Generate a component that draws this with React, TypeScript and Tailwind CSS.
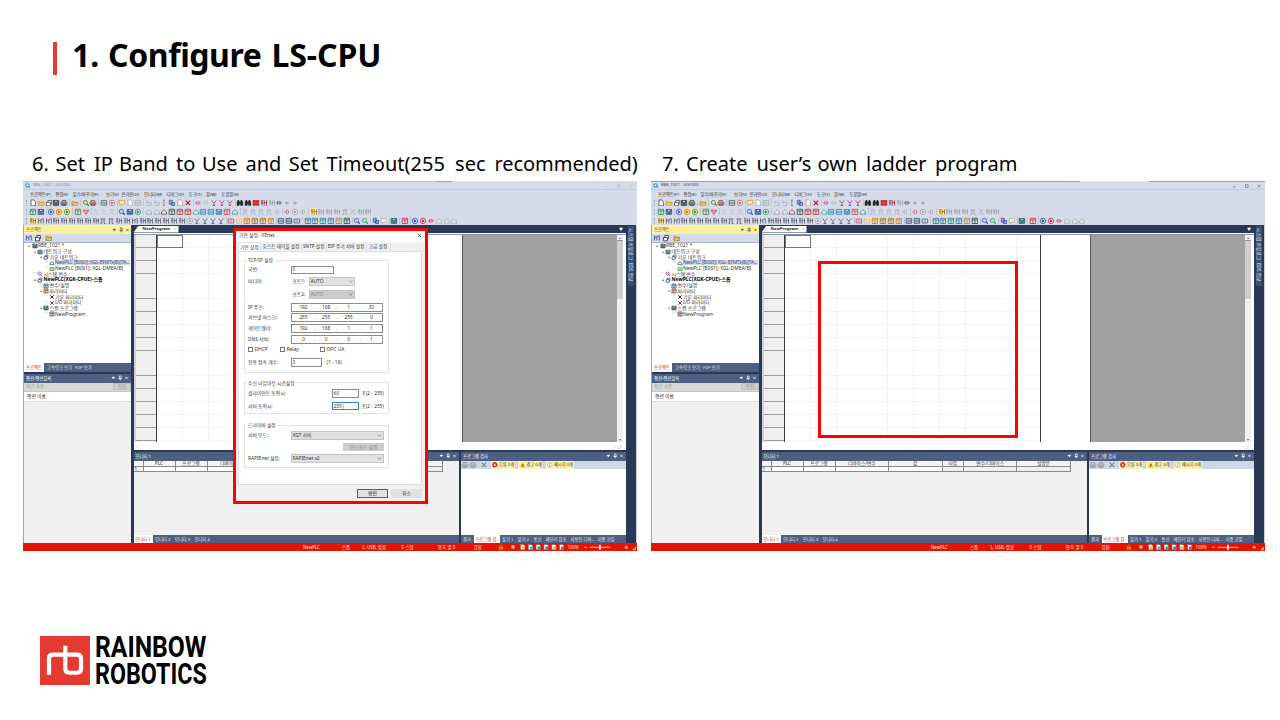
import React from "react";
import clsx from "clsx";

const toolRows: string[] = [
  "d:#444 f:#c9a227 r:#444 s:#333 p:#444 | f:#c08a2c | M:#2f7d6b p:#8a4a4a | l:#5a6a6a o:#c66 | c:#e0902c d:#aaa l:#aaa | u:#aab u:#aab i:#777 C:#3b5ea8 d:#c88 x:#c8102e | a:#c48 a:#bbb y:#a33 y:#a2b y:#b33 | b:#222 b:#222 G2:#c22 k:#823 k:#999 a:#447 w:#889 w:#889",
  "g:#2a8a4a s:#334a7a | o:#2b50c0 O:#c06a10 O:#2a8a3a | g:#5a7a4a v:#c44 | z:#bbb z:#bbb z:#aaa | m:#2a50b0 s:#2a4a8a o:#2a8a4a | h:#99a h:#99a h:#833 g:#444 g:#a33 g:#a33 h:#3a7 l:#28a l:#28a s:#38a g:#c44 h:#486 | t:#aab t:#aab t:#aab t:#aab q:#aab | q:#b55 o:#99a q:#99a | K:#7a6a20 k:#999 k:#999 k:#999 t:#999 z:#999 k:#999 k:#999",
  "K:#6a5a20 n:#556 n:#556 k:#556 k:#556 k:#556 k:#556 k:#556 k:#556 t:#556 t:#556 k:#556 k:#556 n:#556 k:#556 k:#556 k:#556 k:#556 k:#556 k:#556 o:#99a y:#556 y:#556 y:#556 y:#556 | e:#a44 E:#ca8 G:#d07020 G:#963 G:#963 G:#d07020 | l:#456 l:#256 e:#356 | G:#2a6aa0 G:#2a6aa0 g:#2a7aa0 g:#2a7aa0 g:#c08030 g:#243 | m:#3a4ac0 m:#3aa04a | C:#3a4ac0 c:#aaa | s:#1d5a5a | g:#c23 | o:#24a o:#a24 a:#c35 h:#aaa h:#aaa h:#aaa",
];

const shapes: Record<string, React.ReactNode> = {
  d: <path d="M2 1h3l1.5 1.5V7H2z" fill="#fff" />,
  f: <path d="M1 6.5V2.5h2l.6.8H7v3.2zM1.5 6l1-2H7.4" fill="#f7d774" />,
  r: <path d="M1.5 3.5h4V7h-4zM3 3.5V1.5h3.5V5H5.5" fill="#fff" />,
  s: <path d="M1.2 1.5h5.6v5H1.2zM2.5 1.7v2h3v-2M2.5 5.3h3" fill="currentColor" fillOpacity=".55" />,
  p: <path d="M2.2 3.2V1.5h3.6v1.7M1 3.3h6v2.6H1zM2.3 4.8h3.4v2H2.3z" fill="#ccd" />,
  l: <path d="M1.2 1.5h5.6v5H1.2zM1.2 3.2h5.6M1.2 4.9h5.6" fill="#dfe4f2" />,
  o: <><circle cx="4" cy="4" r="2.8" fill="#f3f5fb" /><path d="M3.2 2.7 5.4 4 3.2 5.3z" fill="currentColor" /></>,
  c: <path d="M1.2 1.5h5.6v3.7H4L2.4 6.8V5.2H1.2z" fill="#fff3c8" />,
  u: <path d="M2.8 1.8 1.3 3.3l1.5 1.4M1.4 3.3h3.3q2 0 2 1.8T4.7 6.7H2" fill="none" />,
  i: <path d="M3 1.2h2M4 1.2v5.6M3 6.8h2" fill="none" />,
  C: <path d="M1.3 1.3h3v4h-3zM3.5 3.5h3.2v3.2H3.5z" fill="#8fa6de" />,
  x: <path d="m1.7 1.7 4.6 4.6M6.3 1.7 1.7 6.3" fill="none" strokeWidth="1.3" />,
  a: <path d="M1 4h2M5 4h2M3 2v4M5 2v4" fill="none" />,
  y: <path d="m1.6 1.5 2.4 3 2.4-3M4 4.5v2M2.6 6.6h2.8" fill="none" />,
  b: <path d="M1.2 3.2 2 1.5h1l.3 2h1.4l.3-2h1l.8 1.7v3.3H4.8v-2H3.2v2h-2z" fill="currentColor" />,
  g: <path d="M1.2 1.3h5.6v5.4H1.2zM1.2 3h5.6M4 3v3.7" fill="#cfe0ee" />,
  G2: <path d="M1 1.5h2.6v2H1zM4.4 1.5H7v2H4.4zM1 4.5h2.6v2H1zM4.4 4.500H7v2H4.4z" fill="currentColor" />,
  k: <path d="M1 1.8h2.3M1 4h2.3M2.1 1.8V6.6M4.3 1.3v5.4M4.3 3.6h2.3M6.7 1.3v5.4" fill="none" />,
  n: <path d="M1.5 1.3v5.4M1.5 4 6.5 1.5M4 3v3.5M6.5 2v4.7" fill="none" />,
  t: <path d="M1.5 2h5M2.8 2v4.6M5.2 2v4.6M1.3 6.6h1.5M5.2 6.6h1.5" fill="none" />,
  q: <path d="M1.2 4h1.2M3.8 1.8Q2 4 3.8 6.2M4.8 1.8Q6.8 4 4.8 6.2" fill="none" />,
  w: <path d="M2 4h4M4 2.6v2.8" fill="none" />,
  v: <path d="M1 2.3h6L4 6.5z" fill="#e7a9a9" />,
  z: <path d="M1.5 6.3 6.2 1.7M2 2h2M4.3 6h2.4" fill="none" />,
  m: <><circle cx="3.5" cy="3.5" r="2.2" fill="#bfd8ff" /><path d="m5.2 5.2 1.7 1.7" strokeWidth="1.3" /></>,
  h: <path d="M1.2 6.3h5.6L6.3 4 4 1.7 1.7 4z" fill="#e3e6ee" />,
  e: <path d="M1.2 2.2h5.6v3.9H1.2zM2.5 4.2h3" fill="#eef" />,
};
const litKinds: Record<string, string> = { O: "o", K: "k", G: "g", M: "m", E: "e" };

function Icon({ kind, color }: { kind: string; color: string }) {
  const lit = kind in litKinds;
  return (
    <svg
      viewBox="0 0 8 8"
      className={clsx("h-[7.8px] w-[7.84px] shrink-0", lit && "bg-[#fbe7a2]")}
      style={{ color }}
      stroke="currentColor"
      strokeWidth=".8"
      fill="none"
    >
      {shapes[lit ? litKinds[kind] : kind]}
    </svg>
  );
}

function Toolbar({ spec }: { spec: string }) {
  return (
    <div className="flex h-[9px] items-center pl-[3px]">
      <span className="mr-[2px] h-[6px] w-px shrink-0 border-l border-dotted border-[#9aa4bd]" />
      {spec.split(" ").map((t, i) =>
        t === "|" ? (
          <span key={i} className="ml-[1.2px] mr-[.6px] h-[7px] w-px shrink-0 bg-[#bcc4d8]" />
        ) : (
          <Icon key={i} kind={t.split(":")[0]} color={t.split(":")[1]} />
        )
      )}
    </div>
  );
}

function PanelControls({ dark }: { dark?: boolean }) {
  return (
    <svg viewBox="0 0 18 6" className={clsx("h-[6px] w-[18px] shrink-0", dark ? "text-[#665f35]" : "text-white")} stroke="currentColor" fill="none" strokeWidth=".7">
      <path d="M1 2.300h2.600L2.300 3.800z" fill="currentColor" />
      <path d="M8.3 1h1.8v2.6H8.3zM7.6 3.6h3.2M9.2 3.6V5.4" />
      <path d="m14.3 1.8 2.400 2.400M16.700 1.8l-2.400 2.400" />
    </svg>
  );
}

function BlueHeader({ title, className }: { title: string; className?: string }) {
  return (
    <div className={clsx("flex shrink-0 items-center justify-between bg-[#4d6082] pl-[2px] pr-[2px] text-[4.3px] text-white", className)}>
      <span>{title}</span>
      <PanelControls />
    </div>
  );
}

type Node = { pad: string; text: string; color: string; kind: string; bold?: boolean; sel?: boolean; leaf?: boolean };
const tree: Node[] = [
  { pad: "pl-[3px]", text: "RBE_1021 *", color: "#244a44", kind: "s" },
  { pad: "pl-[8.5px]", text: "네트워크 구성", color: "#2b6a5a", kind: "s" },
  { pad: "pl-[14.5px]", text: "기본 네트워크", color: "#234a7a", kind: "r" },
  { pad: "pl-[20px]", text: "NewPLC [B0S0]: XGL-EFMTx(B)(TA...", color: "#23704a", kind: "h", sel: true, leaf: true },
  { pad: "pl-[20px]", text: "NewPLC [B0S1]: XGL-DMEA/B]", color: "#4a9a3a", kind: "e", leaf: true },
  { pad: "pl-[8.5px]", text: "시스템 변수", color: "#a04ab0", kind: "m", leaf: true },
  { pad: "pl-[8.5px]", text: "NewPLC(XGK-CPUE)-스톱", color: "#234a7a", kind: "r", bold: true },
  { pad: "pl-[14.5px]", text: "변수/설명", color: "#3a6a5a", kind: "g", leaf: true },
  { pad: "pl-[14.5px]", text: "파라미터", color: "#8a5a3a", kind: "g" },
  { pad: "pl-[20px]", text: "기본 파라미터", color: "#222", kind: "x", leaf: true },
  { pad: "pl-[20px]", text: "I/O 파라미터", color: "#a02060", kind: "x", leaf: true },
  { pad: "pl-[14.5px]", text: "스캔 프로그램", color: "#2a5a4a", kind: "s" },
  { pad: "pl-[20px]", text: "NewProgram", color: "#904040", kind: "g", leaf: true },
];

function ProjectPanel() {
  return (
    <div className="flex w-[108px] shrink-0 flex-col border-l border-[#9aa6c0] bg-[#f0f0f0]">
      <div className="flex h-[9px] items-center justify-between bg-[#fff09a] pl-[2px] pr-[1px] text-[4.3px] text-[#555034]">
        <span>프로젝트</span>
        <PanelControls dark />
      </div>
      <div className="flex h-[8px] items-center gap-[1px] bg-[#d3dae9] pl-[1px]">
        <Icon kind="n" color="#2a4a9a" />
        <Icon kind="r" color="#222" />
        <span className="w-[1px]" />
        <Icon kind="f" color="#a07a20" />
      </div>
      <div className="h-[121px] border-t border-[#a9b2c6] bg-white">
        {tree.map((n) => (
          <div key={n.text} className={clsx("flex h-[5.7px] items-center whitespace-nowrap leading-none", n.pad, n.bold ? "text-[5px] font-bold text-black" : "text-[4.9px] text-[#333]")}>
            <span className="w-[4.5px] shrink-0 text-center text-[4px] text-[#777]">{n.leaf ? "┈" : "▴"}</span>
            <svg viewBox="0 0 8 8" className="h-[6px] w-[6px] shrink-0" style={{ color: n.color }} stroke="currentColor" strokeWidth="1" fill="none">
              {shapes[n.kind]}
            </svg>
            <span className={clsx("ml-[.5px] pr-px", n.sel && "bg-[#d3dae9] tracking-[-.16px] text-[#42506e]")}>{n.text}</span>
          </div>
        ))}
      </div>
      <div className="flex h-[8.5px] items-center bg-[#4d6082] text-[4.3px] text-[#dfe5f2]">
        <span className="flex h-full w-[20px] items-center justify-center bg-white text-[#d02020]">프로젝트</span>
        <span className="ml-[3px] w-[28px] whitespace-nowrap">고속링크 보기</span>
        <span>P2P 보기</span>
      </div>
      <div className="h-[2.5px] bg-[#293955]" />
      <BlueHeader title="평션/평션블록" className="h-[8.5px]" />
      <div className="flex h-[8px] items-center bg-[#d8d8d8] text-[4.6px] text-[#999]">
        <span className="w-[89px] pl-[2px]">최근 사용</span>
        <span className="flex h-[7px] flex-1 items-center justify-center border border-[#c0c0c0] bg-[#cfcfcf]">편집</span>
      </div>
      <div className="flex h-[10.5px] items-center border-t border-[#c6c6c6] bg-white pl-[3px] text-[4.8px] text-[#222]">평션 이름</div>
      <div className="flex-1 border-t border-[#ddd] bg-[#f0f0f0]" />
    </div>
  );
}

function Editor() {
  return (
    <div className="flex h-[225px] flex-col">
      <div className="flex h-[7.5px] items-end justify-between pr-[3px]">
        <span className="flex h-[7px] w-[45px] items-center justify-center bg-white text-[4.200px] font-bold text-[#222] [clip-path:polygon(5px_0,100%_0,100%_100%,0_100%)]">
          <span className="pl-[7px]">NewProgram</span>
          <span className="ml-[4px] font-normal text-[#777]">×</span>
        </span>
        <span className="text-[4px] text-white">▼</span>
      </div>
      <div className="h-[1.5px] bg-white" />
      <div className="flex h-[208px] border-t border-[#8b93a5] bg-white">
        <div className="w-[22.500px] border-l-2 border-[#cfd3dc] bg-[#efefef] bg-[repeating-linear-gradient(to_bottom,transparent_0,transparent_12px,#9b9b9b_12px,#9b9b9b_12.85px)]" />
        <div className="w-[257px] border-x border-[#3c3c3c] bg-[repeating-linear-gradient(to_right,transparent_0,transparent_25px,#f1f3f9_25px,#f1f3f9_25.8px),repeating-linear-gradient(to_bottom,transparent_0,transparent_12px,#f3f5fa_12px,#f3f5fa_12.85px)]">
          <div className="h-[13px] w-[26px] border border-[#6470ba] bg-white" />
        </div>
        <div className="w-[48.5px]" />
        <div className="w-[155px] border-l border-[#555] bg-[#a0a0a0]" />
        <div className="flex w-[6px] flex-col items-center justify-between bg-[#f0f0f0] text-[4px] leading-[5px] text-[#666]">
          <span className="w-full border-b border-[#999] text-center">▴</span>
          <span className="mb-auto h-[58px] w-full bg-[#cdcdcd]" />
          <span>▾</span>
        </div>
      </div>
      <div className="flex h-[8px] items-center justify-between bg-white px-[2px] text-[5px] leading-none text-[#aaa]">
        <span>‹</span>
        <span className="mr-[3px]">› ◿</span>
      </div>
    </div>
  );
}

const cols: [string, string][] = [
  ["", "w-[10px]"], ["PLC", "w-[32px]"], ["프로그램", "w-[32px]"], ["디바이스/변수", "w-[53.5px]"],
  ["값", "w-[53.5px]"], ["타입", "w-[21.5px]"], ["변수/디바이스", "w-[53.3px]"], ["설명문", "w-[53.3px]"],
];

function Monitor() {
  return (
    <div className="flex w-[325.5px] flex-col bg-[#f0f0f0]">
      <BlueHeader title="모니터 1" className="h-[8.5px]" />
      <div className="flex h-[6px]">
        {cols.map(([c, w]) => (
          <span key={w + c} className={clsx("flex items-center justify-center border-b border-r border-[#8a8a8a] bg-[#f4f4f4] text-[4.7px] leading-none text-[#333]", w)}>{c}</span>
        ))}
      </div>
      <div className="flex h-[5.5px]">
        {cols.map(([c, w], i) => (
          <span key={w + c} className={clsx("flex items-center border-b border-r border-[#8a8a8a] pl-[1px] text-[4.5px] leading-none text-[#333]", w, i > 0 && i < 5 ? "bg-white" : "bg-[#f0f0f0]")}>{i === 0 ? "1" : ""}</span>
        ))}
      </div>
      <div className="flex-1" />
      <div className="flex h-[8.5px] items-center bg-[#4d6082] text-[4.3px] text-[#e3e8f3]">
        <span className="flex h-full w-[19px] items-center justify-center bg-white text-[#d02020]">모니터 1</span>
        <span className="w-[19.7px] pl-[2.5px]">모니터 2</span>
        <span className="w-[19.7px] pl-[2.5px]">모니터 3</span>
        <span className="pl-[2.5px]">모니터 4</span>
      </div>
    </div>
  );
}

function Check() {
  const chip = "flex h-[7.5px] items-center gap-[1px] bg-[#fdf0b0] px-[1.5px] text-[4.2px] text-[#333] whitespace-nowrap";
  return (
    <div className="flex w-[165px] flex-col bg-white">
      <BlueHeader title="프로그램 검사" className="h-[8.5px]" />
      <div className="flex h-[8.5px] items-center bg-[#cfd6e5]">
        <Icon kind="p" color="#999" />
        <Icon kind="p" color="#999" />
        <span className="w-[3px]" />
        <Icon kind="x" color="#888" />
        <span className={clsx(chip, "ml-[3.500px] w-[24px]")}>
          <svg viewBox="0 0 6 6" className="h-[5.5px] w-[5.5px] shrink-0"><circle cx="3" cy="3" r="2.9" fill="#d8301c" /><path d="m1.8 1.8 2.4 2.4M4.2 1.8 1.8 4.2" stroke="#fff" strokeWidth=".9" /></svg>
          오류 0개
        </span>
        <span className={clsx(chip, "ml-[3.5px] w-[24px]")}>
          <svg viewBox="0 0 6 6" className="h-[5.5px] w-[5.5px] shrink-0"><path d="M3 .3 5.9 5.7H.1z" fill="#f0b400" /><path d="M3 2v2M3 4.5v.7" stroke="#222" strokeWidth=".7" /></svg>
          경고 0개
        </span>
        <span className={clsx(chip, "ml-[3.5px] w-[28px]")}>
          <svg viewBox="0 0 6 6" className="h-[5.5px] w-[5.5px] shrink-0"><circle cx="3" cy="3" r="2.5" fill="#fff" stroke="#7a9ac8" strokeWidth=".6" /><path d="M3 2.7v2M3 1.3v.7" stroke="#2860b0" strokeWidth=".7" /></svg>
          메시지 0개
        </span>
      </div>
      <div className="flex-1" />
      <div className="flex h-[8.5px] items-center whitespace-nowrap bg-[#4d6082] text-[4.3px] text-[#e3e8f3]">
        <span className="w-[13px] pl-[2px]">결과</span>
        <span className="flex h-full w-[26px] items-center justify-center bg-white text-[#d02020]">프로그램 검..</span>
        <span className="w-[15.5px] pl-[2px]">찾기 1</span>
        <span className="w-[16px] pl-[2px]">찾기 2</span>
        <span className="w-[12px] pl-[2px]">통신</span>
        <span className="w-[25px] pl-[2px]">메모리 참조</span>
        <span className="w-[27px] pl-[2px]">사용된 디바...</span>
        <span className="pl-[2px]">이중 코일</span>
      </div>
    </div>
  );
}

function StatusBar() {
  return (
    <div className="flex h-[8px] items-center whitespace-nowrap bg-[#e51400] text-[4.4px] leading-none text-[#ffe3df]">
      <span className="box-content w-[39px] pl-[280px]">NewPLC</span>
      <span className="w-[20.500px]">스톱</span>
      <span className="w-[39px]">L, USB, 정상</span>
      <span className="w-[36px]">0 스텝</span>
      <span className="w-[36px]">행 0, 열 0</span>
      <span className="w-[23px]">검침</span>
      <svg viewBox="0 0 68 8" className="h-[8px] w-[68px] shrink-0">
        <path d="M1.8 3.6h4.4v3H1.8z" fill="#d08a20" />
        <path d="M2.8 3.6V2.7q1.2-1.6 2.4 0v.9" stroke="#d08a20" strokeWidth=".7" fill="none" />
        <circle cx="16" cy="4" r="1.9" fill="#c9a9a4" />
        {["#e8b54a", "#4ab0e0", "#3a9a9a", "#3a80d0", "#c9b070", "#5a8a6a"].map((c, i) => (
          <g key={c} transform={`translate(${23 + i * 7.8} 1.3)`}>
            <path d="M.5.2h3.2l1.2 1.2v4H.5z" fill="#f4f4ee" stroke="#4a5a5a" strokeWidth=".4" />
            <path d="M2 2.3h3v3H2z" fill={c} />
          </g>
        ))}
      </svg>
      <span className="ml-[3px] w-[15px]">100%</span>
      <svg viewBox="0 0 54 8" className="h-[8px] w-[54px] shrink-0" stroke="#fff" strokeWidth=".7" fill="none">
        <path d="M1 4.3h3M6.5 4.3h21M17 2v4.6" />
        <path d="M16.5 2h1v4.5h-1z" fill="#fff" />
        <path d="M41.5 4.3h3.4M43.2 2.6V6M50 6.8l2.4-2.4v2.4z" />
      </svg>
    </div>
  );
}

const menus: [string, string][] = [
  ["프로젝트(P)", "w-[25.5px]"], ["편집(E)", "w-[17px]"], ["찾기/바꾸기(F)", "w-[33.5px]"], ["보기(V)", "w-[15.5px]"], ["온라인(O)", "w-[22.5px]"],
  ["모니터(M)", "w-[22.5px]"], ["디버그(D)", "w-[22.5px]"], ["도구(T)", "w-[17px]"], ["창(W)", "w-[15.5px]"], ["도움말(H)", "w-[20px]"],
];

function XgWindow({ active }: { active?: boolean }) {
  const edge = active ? "bg-[#cf8a8f]" : "bg-[#bcc0cc]";
  return (
    <div className="flex h-[370px] w-[614px] flex-col overflow-hidden bg-[#d6dbe9]">
      <div className="flex h-px shrink-0">
        <span className={clsx("w-[412px]", edge)} />
        <span className="w-[17px] bg-[#6fb0e8]" />
        <span className="w-[69px] bg-[#dfe5ee]" />
        <span className={clsx("flex-1", active ? edge : "bg-[#d6dbe9]")} />
      </div>
      <div className={clsx("flex h-[8px] items-center border-b border-[#c5cbdb] pl-[2px] pr-[3px] text-[4.2px]", active ? "text-[#444]" : "text-[#8a8f9c]")}>
        <svg viewBox="0 0 6 6" className="h-[5px] w-[5px]"><circle cx="3" cy="2.8" r="2" fill="#e8f8ff" stroke="#1c9ad0" strokeWidth="1.3" /><path d="m4 4 1.6 1.6" stroke="#3a6ab0" strokeWidth="1.2" /></svg>
        <span className="ml-[3px]">RBE_1021 - XG5000</span>
        <svg viewBox="0 0 30 6" className="ml-auto h-[6px] w-[30px]" fill="none" stroke="currentColor" strokeWidth=".6" opacity={active ? 0.8 : 0.35}>
          <path d="M1 4h2.500M13.500 1.7h2.600v2.600h-2.600zM26 1.7l2.600 2.600M28.600 1.7l-2.600 2.600" />
        </svg>
      </div>
      <div className="flex h-[8px] items-center whitespace-nowrap pl-[7px] text-[4.3px] tracking-[-.05px] text-[#333]">
        {menus.map(([m, w]) => (
          <span key={m} className={w}>{m}</span>
        ))}
      </div>
      {toolRows.map((r) => (
        <Toolbar key={r} spec={r} />
      ))}
      <div className="flex h-[318px] bg-[#293955]">
        <ProjectPanel />
        <div className="ml-[2.5px] flex w-[492.5px] flex-col">
          <Editor />
          <div className="mt-[2px] flex min-h-0 flex-1 justify-between">
            <Monitor />
            <Check />
          </div>
        </div>
        <div className="ml-[2px] mt-[1px] flex h-[60px] w-[6px] items-center bg-[#3d4f71] pt-[2px] text-[4.8px] leading-[6px] text-[#dfe6f3] [text-orientation:sideways] [writing-mode:vertical-rl]">
          <span className="whitespace-nowrap">시스템 카탈로그&nbsp; EDS 정보</span>
        </div>
        <div className="ml-auto w-[1.5px] bg-[#c8cede]" />
      </div>
      <StatusBar />
    </div>
  );
}

function Group({ title, className, children }: { title: string; className: string; children: React.ReactNode }) {
  return (
    <div className={clsx("w-[145px] border border-[#e2e2e2]", className)}>
      <div className="flex h-0 items-center"><span className="ml-[2px] whitespace-nowrap bg-white px-[1px] leading-none">{title}</span></div>
      {children}
    </div>
  );
}

function Row({ label, className, children }: { label: string; className: string; children: React.ReactNode }) {
  return (
    <div className={clsx("flex items-center pl-[3px]", className)}>
      <span className="w-[42.5px] shrink-0 whitespace-nowrap">{label}</span>
      {children}
    </div>
  );
}

function Ip({ v }: { v: string[] }) {
  return (
    <div className="flex h-[9px] w-[92.5px] items-center border border-[#8c8c8c] bg-white pl-[2px]">
      {v.map((n, i) => (
        <React.Fragment key={i}>
          <span className="w-[20px] text-center">{n}</span>
          {i < 3 && <span className="w-[2.6px] text-center">.</span>}
        </React.Fragment>
      ))}
    </div>
  );
}

function Combo({ v, className }: { v: string; className: string }) {
  return (
    <div className={clsx("flex h-[9px] items-center justify-between border px-[1px]", className)}>
      <span>{v}</span>
      <svg viewBox="0 0 6 6" className="h-[5px] w-[5px]" fill="none" stroke="#777" strokeWidth=".9"><path d="m1 2 2 2 2-2" /></svg>
    </div>
  );
}

function Field({ v, className }: { v: string; className: string }) {
  return <div className={clsx("flex items-center border bg-white pl-[1px]", className)}>{v}</div>;
}

function Dialog() {
  const grey = "border-[#c4c4c4] bg-[#e1e1e1]";
  return (
    <div className="absolute left-[210px] top-[47px] flex h-[276px] w-[195px] flex-col border-[3px] border-[#ff0000] bg-[#f0f0f0] text-[4.8px] leading-none text-[#333]">
      <div className="flex h-[10.5px] items-center justify-between bg-white px-[3px] pb-[3px]">
        <span className="mt-[1px]">기본 설정 - FEnet</span>
        <svg viewBox="0 0 6 6" className="mt-[1px] h-[5px] w-[5px]" stroke="#333" strokeWidth=".8"><path d="m1 1 4 4M5 1 1 5" /></svg>
      </div>
      <div className="mt-[.5px] flex h-[9px] items-center whitespace-nowrap pl-[2px] text-[4.700px]">
        <span className="flex h-full w-[23px] items-center justify-center border border-b-0 border-[#ddd] bg-white">기본 설정</span>
        <span className="flex h-[8px] w-[41px] items-center justify-center border-r border-[#ddd]">호스트 테이블 설정</span>
        <span className="flex h-[8px] w-[24.5px] items-center justify-center border-r border-[#ddd]">SNTP 설정</span>
        <span className="flex h-[8px] w-[40px] items-center justify-center border-r border-[#ddd]">EIP 주기 서버 설정</span>
        <span className="flex h-[8px] w-[24px] items-center justify-center border-r border-[#ddd]">고급 설정</span>
      </div>
      <div className="ml-[2px] h-[234px] w-[184px] border border-[#dedede] bg-white pl-[5px] pt-[7.500px]">
        <Group title="TCP/IP 설정" className="h-[113px]">
          <Row label="국번:" className="mt-[4px] h-[10.5px]"><Field v="0" className="h-[8.5px] w-[43px] border-[#8c8c8c]" /></Row>
          <Row label="미디어:" className="h-[12.5px]"><span className="w-[18px] pl-[2px]">포트1:</span><Combo v="AUTO" className={clsx("w-[46px]", grey)} /></Row>
          <Row label="" className="h-[13px]"><span className="w-[18px] pl-[2px]">포트2:</span><Combo v="AUTO" className="w-[46px] border-[#c4c4c4] bg-[#cccccc] text-[#888]" /></Row>
          <Row label="IP 주소:" className="mt-[1px] h-[11px]"><Ip v={["192", "168", "1", "30"]} /></Row>
          <Row label="서브넷 마스크:" className="h-[10.5px]"><Ip v={["255", "255", "255", "0"]} /></Row>
          <Row label="게이트웨이:" className="h-[11px]"><Ip v={["192", "168", "1", "1"]} /></Row>
          <Row label="DNS 서버:" className="h-[10.5px]"><Ip v={["0", "0", "0", "1"]} /></Row>
          <div className="flex h-[10.5px] items-center pl-[3px]">
            {[["DHCP", "w-[32px]"], ["Relay", "w-[40px]"], ["OPC UA", "w-[40px]"]].map(([t, w]) => (
              <span key={t} className={clsx("flex items-center gap-[1.5px] text-[4.9px]", w)}><span className="h-[5px] w-[5px] border border-[#777]" />{t}</span>
            ))}
          </div>
          <Row label="전용 접속 개수:" className="h-[15px]"><Field v="3" className="h-[8.5px] w-[31px] border-[#8c8c8c]" /><span className="ml-[5px]">(1 - 16)</span></Row>
        </Group>
        <Group title="수신 타임아웃 시간설정" className="mt-[9.5px] h-[32px]">
          <Row label="클라이언트 동작시:" className="mt-[4px] h-[13px]"><Field v="60" className="ml-[41px] h-[8.5px] w-[27px] border-[#8c8c8c]" /><span className="ml-[3px] whitespace-nowrap">초(2 - 255)</span></Row>
          <Row label="서버 동작시:" className="h-[12px]"><Field v="255|" className="ml-[41px] h-[8.5px] w-[27px] border-[#2a86d8]" /><span className="ml-[3px] whitespace-nowrap">초(2 - 255)</span></Row>
        </Group>
        <Group title="드라이버 설정" className="mt-[10.500px] h-[43px]">
          <Row label="서버 모드:" className="mt-[4px] h-[12px]"><Combo v="XGT 서버" className={clsx("w-[93px]", grey)} /></Row>
          <div className="flex h-[11.5px] items-center pl-[98px]"><span className="flex h-[8px] w-[41px] items-center justify-center bg-[#cccccc] text-[#8a8a8a]">모드버스 설정</span></div>
          <Row label="RAPIEnet 설정:" className="h-[11.5px]"><Combo v="RAPIEnet v2" className={clsx("w-[93px]", grey)} /></Row>
        </Group>
      </div>
      <div className="flex flex-1 items-center justify-end gap-[3px] pr-[3px] pt-px">
        <span className="flex h-[9px] w-[31px] items-center justify-center border border-[#0078d7] bg-[#e1e1e1] text-black">확인</span>
        <span className="flex h-[9px] w-[31px] items-center justify-center border border-[#e0e0e0] bg-[#e1e1e1]">취소</span>
      </div>
    </div>
  );
}

function Words({ words }: { words: [string, string][] }) {
  return (
    <p className="-mt-px flex h-[28px] whitespace-nowrap text-[20px] leading-[28px] text-black">
      {words.map(([t, c], i) => (
        <span key={i} className={clsx("shrink-0", c)}>{t}{" "}</span>
      ))}
    </p>
  );
}

export default function App() {
  return (
    <main className="flex h-[720px] w-[1280px] flex-col overflow-hidden bg-white [font-family:'Noto_Sans','Noto_Sans_CJK_KR',sans-serif]">
      <header className="flex h-[151px] pl-[53px] pt-[35px]">
        <span className="mt-[7px] h-[33px] w-[4px] bg-[#e53a30]" />
        <h1 className="ml-[15px] flex whitespace-nowrap text-[32px] font-bold leading-[40px] text-black">
          <span className="w-[36px]">1. </span>
          <span className="w-[163.500px] tracking-[-.4px]">Configure </span>
          <span className="tracking-[-.1px]">LS-CPU</span>
        </h1>
      </header>
      <section className="flex h-[400px] gap-[14px] pl-[23px]">
        <article className="w-[614px]">
          <div className="flex h-[30px] pl-[9px]">
            <Words words={[["6.", "w-[23.5px]"], ["Set", "w-[38.5px]"], ["IP", "w-[25px]"], ["Band", "w-[57px]"], ["to", "w-[26px]"], ["Use", "w-[43.5px]"], ["and", "w-[43.3px]"], ["Set", "w-[37.8px]"], ["Timeout(255", "w-[128.5px]"], ["sec", "w-[39.4px]"], ["recommended)", "tracking-[-.05px]"]]} />
          </div>
          <div className="relative">
            <XgWindow />
            <Dialog />
          </div>
        </article>
        <article className="w-[614px]">
          <div className="flex h-[30px] pl-[11px]">
            <Words words={[["7.", "w-[24px]"], ["Create", "w-[70.500px]"], ["user’s", "w-[61px]"], ["own", "w-[48.5px]"], ["ladder", "w-[69px]"], ["program", ""]]} />
          </div>
          <div className="relative">
            <XgWindow active />
            <div className="absolute left-[167px] top-[80px] h-[177px] w-[200px] border-[3px] border-[#ff0000]" />
          </div>
        </article>
      </section>
      <footer className="flex pl-[40px] pt-[85px]">
        <svg viewBox="0 0 50 50" className="h-[49px] w-[50px]" preserveAspectRatio="none">
          <path d="M0 0h50v50H0z" fill="#e53a30" />
          <path d="M9 39.500V23q0-4 4-4H37q4 0 4 4V33.500q0 4-4 4H29.300q-4 0-4-4V10" fill="none" stroke="#fff" strokeWidth="4.200" />
        </svg>
        <div className="-mt-[3px] ml-[5px] text-[30px] font-bold leading-[27px] text-black [font-family:Roboto,sans-serif]">
          <div className="w-fit origin-left scale-x-[.823] whitespace-nowrap">RAINBOW</div>
          <div className="w-fit origin-left scale-x-[.775] whitespace-nowrap">ROBOTICS</div>
        </div>
      </footer>
    </main>
  );
}
